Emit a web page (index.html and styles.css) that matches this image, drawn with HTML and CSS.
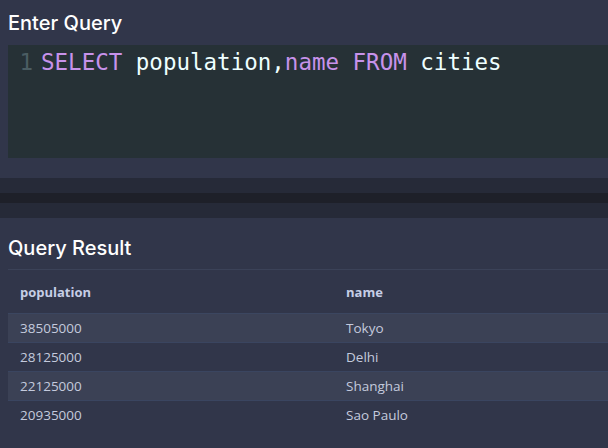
FILE: index.html
```html
<!DOCTYPE html>
<html lang="en">
<head>
<meta charset="utf-8">
<title>SQL Playground</title>
<link rel="stylesheet" href="styles.css">
</head>
<body>
<main class="app">
  <section class="query">
    <h2 class="title">Enter Query</h2>
    <div class="editor">
      <div class="gutter">1</div>
      <pre class="code"><span class="kw">SELECT</span> population,<span class="kw">name</span> <span class="kw">FROM</span> cities</pre>
    </div>
  </section>
  <div class="splitter"><div class="splitter-bar"></div></div>
  <section class="result">
    <h2 class="title">Query Result</h2>
    <div class="table-wrap">
      <table class="grid">
        <thead>
          <tr><th>population</th><th>name</th></tr>
        </thead>
        <tbody>
          <tr class="odd"><td>38505000</td><td>Tokyo</td></tr>
          <tr><td>28125000</td><td>Delhi</td></tr>
          <tr class="odd"><td>22125000</td><td>Shanghai</td></tr>
          <tr><td>20935000</td><td>Sao Paulo</td></tr>
        </tbody>
      </table>
    </div>
  </section>
</main>
</body>
</html>
```

FILE: styles.css
```css
html, body {
  margin: 0;
  padding: 0;
}
body {
  background: #31364a;
  overflow: hidden;
  font-family: "Open Sans", "Noto Sans", sans-serif;
  color: #ffffff;
}
.app {
  width: 100%;
  overflow: hidden;
}
.query {
  padding: 9px 0 20px 8px;
}
.title {
  margin: 0 0 8px;
  font-family: Inter, "Open Sans", sans-serif;
  font-size: 20px;
  line-height: 28px;
  font-weight: 500;
  color: #ffffff;
}
.editor {
  display: flex;
  height: 113px;
  background: #263136;
  padding-top: 4px;
  box-sizing: border-box;
  font-family: "DejaVu Sans Mono", "Liberation Mono", monospace;
  font-size: 22.5px;
  line-height: 26px;
}
.gutter {
  width: 25px;
  text-align: right;
  color: #4b5d63;
}
.code {
  margin: 0;
  padding-left: 8px;
  font: inherit;
  color: #eeffff;
}
.kw {
  color: #c792ea;
}
.splitter {
  background: #262a38;
  padding: 15px 0;
}
.splitter-bar {
  height: 10px;
  background: #1e2029;
}
.result {
  padding: 16px 0 0 8px;
}
.result .title {
  margin-bottom: 7px;
}
.table-wrap {
  overflow: hidden;
}
.grid {
  width: 652px;
  border-collapse: collapse;
  table-layout: fixed;
  border-top: 1px solid #3b4258;
}
.grid th,
.grid td {
  text-align: left;
  padding: 0 12px;
}
.grid th {
  height: 42px;
  font-size: 13px;
  font-weight: 700;
  color: #c6cee6;
  border-bottom: 1px solid #3b4660;
}
.grid td {
  height: 28px;
  font-size: 13.5px;
  color: #c4cadd;
  border-bottom: 1px solid #3a4560;
}
.grid thead tr th {
  padding-top: 1px;
}
.grid tr.odd td {
  background: #3b4155;
}
.grid tbody tr:last-child td {
  border-bottom: none;
}
```
